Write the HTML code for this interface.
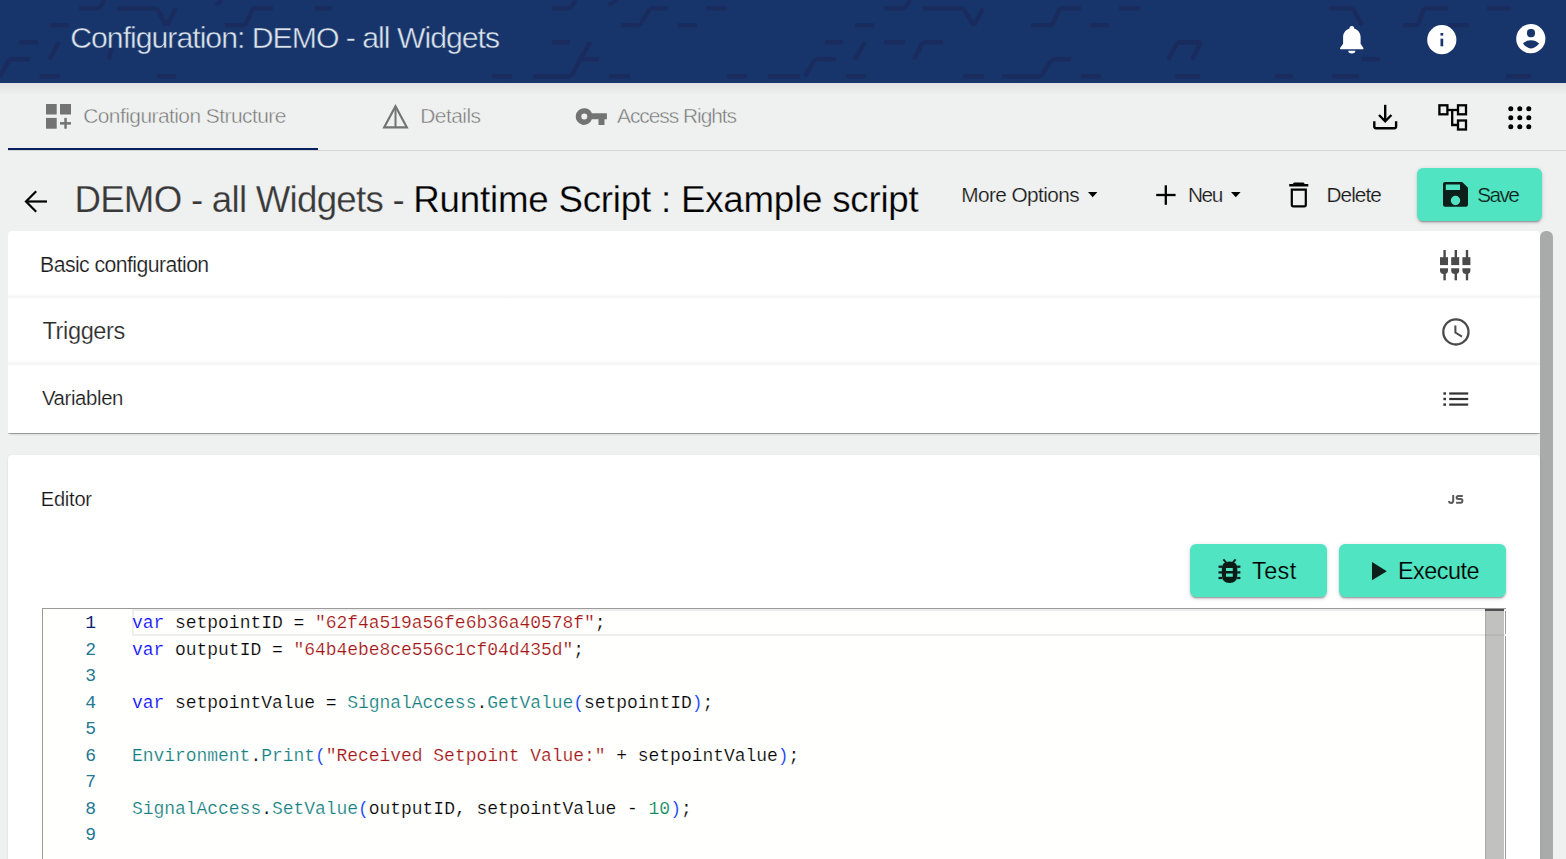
<!DOCTYPE html>
<html><head><meta charset="utf-8"><style>
html,body{margin:0;padding:0;width:1566px;height:859px;overflow:hidden;background:#eff1f0;font-family:"Liberation Sans",sans-serif;}
.t{position:absolute;white-space:pre;}
.a{position:absolute;}
svg{position:absolute;overflow:visible;}
</style></head><body>

<div class="a" style="left:0;top:0;width:1566px;height:83px;background:#17356b;overflow:hidden">
<svg width="1566" height="83" style="left:0;top:0"><g stroke="#1a2b5d" stroke-width="4.2" fill="none" stroke-linecap="butt">
<line x1="79" y1="8.3" x2="100" y2="8.3"/>
<line x1="117" y1="8.3" x2="157" y2="8.3"/>
<line x1="50" y1="25.3" x2="69" y2="25.3"/>
<line x1="19" y1="42.3" x2="38" y2="42.3"/>
<line x1="9.6" y1="59.3" x2="29.4" y2="59.3"/>
<line x1="39.6" y1="76.3" x2="60" y2="76.3"/>
<line x1="157" y1="76.3" x2="176" y2="76.3"/>
<line x1="253" y1="8.3" x2="273" y2="8.3"/>
<line x1="225" y1="25.3" x2="245" y2="25.3"/>
<line x1="315" y1="8.3" x2="332" y2="8.3"/>
<line x1="552" y1="8.3" x2="570" y2="8.3"/>
<line x1="650" y1="8.3" x2="668" y2="8.3"/>
<line x1="621" y1="25.3" x2="640" y2="25.3"/>
<line x1="678" y1="25.3" x2="697" y2="25.3"/>
<line x1="706" y1="8.3" x2="727" y2="8.3"/>
<line x1="552" y1="42.3" x2="570" y2="42.3"/>
<line x1="580" y1="59.3" x2="599" y2="59.3"/>
<line x1="492" y1="76.3" x2="512" y2="76.3"/>
<line x1="533" y1="76.3" x2="571" y2="76.3"/>
<line x1="609" y1="76.3" x2="630" y2="76.3"/>
<line x1="727" y1="76.3" x2="747" y2="76.3"/>
<line x1="768" y1="76.3" x2="800" y2="76.3"/>
<line x1="884" y1="8.3" x2="905" y2="8.3"/>
<line x1="923" y1="8.3" x2="963" y2="8.3"/>
<line x1="1060" y1="8.3" x2="1081" y2="8.3"/>
<line x1="1119" y1="8.3" x2="1140" y2="8.3"/>
<line x1="855" y1="25.3" x2="874" y2="25.3"/>
<line x1="1031" y1="25.3" x2="1052" y2="25.3"/>
<line x1="1090" y1="25.3" x2="1109" y2="25.3"/>
<line x1="825" y1="42.3" x2="843" y2="42.3"/>
<line x1="884" y1="42.3" x2="905" y2="42.3"/>
<line x1="923" y1="42.3" x2="943" y2="42.3"/>
<line x1="1178" y1="42.3" x2="1200" y2="42.3"/>
<line x1="815" y1="59.3" x2="836" y2="59.3"/>
<line x1="1052" y1="59.3" x2="1071" y2="59.3"/>
<line x1="846" y1="76.3" x2="866" y2="76.3"/>
<line x1="963" y1="76.3" x2="984" y2="76.3"/>
<line x1="1002" y1="76.3" x2="1041" y2="76.3"/>
<line x1="1081" y1="76.3" x2="1101" y2="76.3"/>
<line x1="1175" y1="76.3" x2="1200" y2="76.3"/>
<line x1="1329" y1="8.3" x2="1353" y2="8.3"/>
<line x1="1424" y1="8.3" x2="1448" y2="8.3"/>
<line x1="1487" y1="8.3" x2="1511" y2="8.3"/>
<line x1="1403" y1="25.3" x2="1418" y2="25.3"/>
<line x1="1448" y1="25.3" x2="1469" y2="25.3"/>
<line x1="1177" y1="42.3" x2="1201" y2="42.3"/>
<line x1="1362" y1="59.3" x2="1380" y2="59.3"/>
<line x1="1275" y1="76.3" x2="1293" y2="76.3"/>
<line x1="1332" y1="76.3" x2="1359" y2="76.3"/>
<line x1="1506" y1="76.3" x2="1531" y2="76.3"/>
<line x1="100" y1="8.3" x2="104" y2="0"/>
<line x1="157" y1="8.3" x2="166" y2="25.3"/>
<line x1="176" y1="8.3" x2="167" y2="25.3"/>
<line x1="58.7" y1="42.3" x2="49.8" y2="59.3"/>
<line x1="9.6" y1="59.3" x2="0" y2="76.3"/>
<line x1="112" y1="48.5" x2="108.5" y2="59.3"/>
<line x1="253" y1="8.3" x2="245" y2="25.3"/>
<line x1="216" y1="5" x2="222" y2="0"/>
<line x1="570" y1="8.3" x2="576" y2="0"/>
<line x1="609" y1="5" x2="617" y2="0"/>
<line x1="650" y1="8.3" x2="640" y2="25.3"/>
<line x1="590" y1="42.3" x2="571" y2="76.3"/>
<line x1="905" y1="8.3" x2="910" y2="0"/>
<line x1="963" y1="8.3" x2="974" y2="25.3"/>
<line x1="974" y1="25.3" x2="983" y2="8.3"/>
<line x1="1052" y1="25.3" x2="1060" y2="8.3"/>
<line x1="865" y1="42.3" x2="855" y2="59.3"/>
<line x1="923" y1="42.3" x2="914" y2="59.3"/>
<line x1="1178" y1="42.3" x2="1168" y2="59.3"/>
<line x1="815" y1="59.3" x2="805" y2="76.3"/>
<line x1="1052" y1="59.3" x2="1041" y2="76.3"/>
<line x1="1353" y1="8.3" x2="1362" y2="25.3"/>
<line x1="1448" y1="8.3" x2="1448" y2="8.3"/>
<line x1="1418" y1="25.3" x2="1424" y2="8.3"/>
<line x1="1201" y1="42.3" x2="1192" y2="59.3"/>
</g></svg></div>
<div class="t" style="left:70.2px;top:22.8px;font-size:30.23px;line-height:30.23px;letter-spacing:-0.997px;color:#dce3ec;-webkit-text-stroke:0.45px #17356b;">Configuration: DEMO - all Widgets</div>
<svg width="30" height="32" style="left:1337px;top:24px" viewBox="0 0 30 32">
<path fill="#fff" d="M6.1 19.7 V13.2 C6.1 8.4 9.2 5.4 12.4 4.7 A2.45 2.6 0 0 1 17.3 4.7 C20.5 5.4 23.6 8.4 23.6 13.2 V19.7 L26.4 24.1 Q26.9 25.3 25.7 25.3 H3.8 Q2.6 25.3 3.1 24.1 Z"/>
<path fill="#fff" d="M11.3 26.7 H18.3 A3.5 2.8 0 0 1 11.3 26.7 Z"/>
</svg>
<svg width="30" height="30" style="left:1426.5px;top:24.5px" viewBox="0 0 30 30">
<circle cx="14.8" cy="14.7" r="14.6" fill="#fff"/>
<rect x="13.5" y="8" width="2.7" height="2.6" fill="#17356b"/>
<rect x="13.5" y="13.7" width="2.7" height="7.6" fill="#17356b"/>
</svg>
<svg width="30" height="30" style="left:1515.8px;top:24.1px" viewBox="0 0 30 30">
<circle cx="14.8" cy="14.7" r="14.6" fill="#fff"/>
<rect x="11" y="5" width="8" height="8.2" rx="3.6" fill="#17356b"/>
<path fill="#17356b" d="M7 19.6 C11 15.0 19 15.0 23.1 19.6 C19.8 24.2 15.0 24.6 15.0 24.6 C15.0 24.6 10.5 24.2 7 19.6 Z"/>
</svg>
<div class="a" style="left:0;top:83px;width:1566px;height:12px;background:linear-gradient(#e0e2e1,#eff1f0)"></div>
<div class="a" style="left:8px;top:150px;width:1558px;height:1px;background:#d3d5d4"></div>
<div class="a" style="left:8px;top:147.7px;width:309.8px;height:2.3px;background:#0a1f5e"></div>
<svg width="26" height="26" style="left:45.8px;top:104px" viewBox="0 0 26 26">
<g fill="#737373"><rect x="0" y="0" width="10.7" height="10.5"/><rect x="14" y="0" width="11" height="10.5"/><rect x="0" y="13.9" width="10.7" height="10.8"/>
<rect x="18.3" y="13.9" width="2.5" height="10.8"/><rect x="14" y="18.1" width="11" height="2.5"/></g></svg>
<svg width="28" height="26" style="left:381.5px;top:104px" viewBox="0 0 28 26">
<path d="M13.5 2.3 L2.2 23.3 H24.8 Z" fill="none" stroke="#737373" stroke-width="2.2" stroke-linejoin="miter"/>
<line x1="13.5" y1="3" x2="13.5" y2="23.3" stroke="#737373" stroke-width="2"/></svg>
<svg width="32" height="18" style="left:576px;top:107.5px" viewBox="0 0 32 18">
<path fill="#737373" fill-rule="evenodd" d="M8.3 0.3 A8.3 8.3 0 0 1 15.9 5.3 H30.9 V11.2 H28.5 V17 H22.5 V11.2 H15.9 A8.3 8.3 0 1 1 8.3 0.3 Z M8.3 5.5 A3 3 0 1 0 8.3 11.5 A3 3 0 1 0 8.3 5.5 Z"/></svg>
<div class="t" style="left:83.2px;top:105.9px;font-size:20.93px;line-height:20.93px;letter-spacing:-0.545px;color:#757575;-webkit-text-stroke:0.45px #eff1f0;">Configuration Structure</div>
<div class="t" style="left:420.3px;top:106.1px;font-size:20.93px;line-height:20.93px;letter-spacing:-0.55px;color:#757575;-webkit-text-stroke:0.45px #eff1f0;">Details</div>
<div class="t" style="left:617.0px;top:106.1px;font-size:20.93px;line-height:20.93px;letter-spacing:-1.042px;color:#757575;-webkit-text-stroke:0.45px #eff1f0;">Access Rights</div>
<svg width="26" height="27" style="left:1372px;top:104px" viewBox="0 0 26 27">
<g fill="none" stroke="#000" stroke-width="2.4" stroke-linecap="butt"><line x1="13.2" y1="0.8" x2="13.2" y2="17"/>
<polyline points="7,11 13.2,17.3 19.4,11" stroke-linejoin="miter"/>
<path d="M2.3 17.2 V22.6 Q2.3 24.2 3.9 24.2 H22.5 Q24.1 24.2 24.1 22.6 V17.2"/></g></svg>
<svg width="30" height="28" style="left:1438px;top:104px" viewBox="0 0 30 28">
<g fill="none" stroke="#000" stroke-width="2.3"><rect x="1.4" y="1.3" width="8" height="9"/><rect x="20" y="1.3" width="8" height="9"/><rect x="20" y="16.5" width="8" height="9"/>
<polyline points="9.4,6 20,6"/><polyline points="14.2,6 14.2,21 20,21"/></g></svg>
<svg width="26" height="26" style="left:1507.6px;top:105.6px" viewBox="0 0 26 26"><g fill="#000"><circle cx="2.8" cy="2.8" r="2.5"/><circle cx="2.8" cy="11.8" r="2.5"/><circle cx="2.8" cy="20.8" r="2.5"/><circle cx="11.8" cy="2.8" r="2.5"/><circle cx="11.8" cy="11.8" r="2.5"/><circle cx="11.8" cy="20.8" r="2.5"/><circle cx="20.8" cy="2.8" r="2.5"/><circle cx="20.8" cy="11.8" r="2.5"/><circle cx="20.8" cy="20.8" r="2.5"/></g></svg>
<svg width="24" height="24" style="left:23.5px;top:189.5px" viewBox="0 0 24 24">
<g fill="none" stroke="#000" stroke-width="2.2"><line x1="2" y1="11.5" x2="23" y2="11.5"/><polyline points="12.2,1.3 2,11.5 12.2,21.7"/></g></svg>
<div class="t" style="left:74.4px;top:182.2px;font-size:36.7px;line-height:36.7px;letter-spacing:-0.747px;color:#383838;-webkit-text-stroke:0.25px #eff1f0;">DEMO - all Widgets - </div>
<div class="t" style="left:413.3px;top:182.2px;font-size:36.7px;line-height:36.7px;letter-spacing:-0.21px;color:#000000;-webkit-text-stroke:0.25px #eff1f0;">Runtime Script : Example script</div>
<div class="t" style="left:961.3px;top:184.5px;font-size:20.78px;line-height:20.78px;letter-spacing:-0.582px;color:#1a1a1a;-webkit-text-stroke:0.2px #eff1f0;">More Options</div>
<svg width="10" height="6" style="left:1087.5px;top:191.5px" viewBox="0 0 10 6"><path d="M0 0 H9.4 L4.7 5.3 Z" fill="#000"/></svg>
<svg width="20" height="20" style="left:1156px;top:184.5px" viewBox="0 0 20 20"><g stroke="#000" stroke-width="2.3"><line x1="9.8" y1="0.3" x2="9.8" y2="19.8"/><line x1="0.2" y1="10" x2="19.6" y2="10"/></g></svg>
<div class="t" style="left:1188.0px;top:184.6px;font-size:20.78px;line-height:20.78px;letter-spacing:-1.45px;color:#1a1a1a;-webkit-text-stroke:0.2px #eff1f0;">Neu</div>
<svg width="10" height="6" style="left:1231.2px;top:191.5px" viewBox="0 0 10 6"><path d="M0 0 H9.6 L4.8 5.3 Z" fill="#000"/></svg>
<svg width="20" height="26" style="left:1289px;top:181.5px" viewBox="0 0 20 26">
<path fill="#000" d="M5 0.5 H14.5 L15.8 2 H19.3 V4.5 H0.2 V2 H3.7 Z"/>
<path fill="none" stroke="#000" stroke-width="2.2" d="M2.8 7.6 V22.8 Q2.8 24.3 4.3 24.3 H15.3 Q16.8 24.3 16.8 22.8 V7.6 H2.8 Z"/></svg>
<div class="t" style="left:1326.6px;top:184.6px;font-size:20.78px;line-height:20.78px;letter-spacing:-0.98px;color:#1a1a1a;-webkit-text-stroke:0.2px #eff1f0;">Delete</div>
<div class="a" style="left:1417px;top:168px;width:125px;height:52.5px;border-radius:6px;background:#50e4c3;box-shadow:0 3px 1px -2px rgba(0,0,0,.2),0 2px 2px 0 rgba(0,0,0,.14),0 1px 5px 0 rgba(0,0,0,.12)"></div>
<svg width="26" height="26" style="left:1442.8px;top:182.2px" viewBox="0 0 26 26">
<path fill="#0d1f1a" fill-rule="evenodd" d="M2 0 H19.2 L25 5.8 V22.7 Q25 24.8 22.9 24.8 H2.1 Q0 24.8 0 22.7 V2 Q0 0 2 0 Z M2.8 2.6 V7.9 H17 V2.6 Z M12.5 13.8 A4.7 4.7 0 1 0 12.5 23.2 A4.7 4.7 0 1 0 12.5 13.8 Z"/></svg>
<div class="t" style="left:1477.3px;top:184.5px;font-size:20.78px;line-height:20.78px;letter-spacing:-1.6px;color:#0d1f1a;-webkit-text-stroke:0.2px #50e4c3;">Save</div>
<div class="a" style="left:8px;top:231px;width:1532px;height:202px;background:#fff;border-radius:4px 4px 0 0;box-shadow:0 1px 0.6px -0.3px rgba(0,0,0,.38),0 3px 3px -2px rgba(0,0,0,.18)"></div>
<div class="a" style="left:8px;top:293px;width:1532px;height:6px;background:linear-gradient(#fff,#f5f5f5 70%,#fff)"></div>
<div class="a" style="left:8px;top:360px;width:1532px;height:6px;background:linear-gradient(#fff,#f5f5f5 70%,#fff)"></div>
<div class="t" style="left:40.1px;top:253.6px;font-size:21.22px;line-height:21.22px;letter-spacing:-0.567px;color:#1a1a1a;-webkit-text-stroke:0.2px #fff;">Basic configuration</div>
<div class="t" style="left:42.5px;top:319.5px;font-size:23.55px;line-height:23.55px;letter-spacing:-0.386px;color:#2b2b2b;-webkit-text-stroke:0.2px #fff;">Triggers</div>
<div class="t" style="left:41.9px;top:388.3px;font-size:20.35px;line-height:20.35px;letter-spacing:-0.363px;color:#1a1a1a;-webkit-text-stroke:0.2px #fff;">Variablen</div>
<svg width="34" height="32" style="left:1440.4px;top:249.8px" viewBox="0 0 34 32"><g fill="#4a4a4a"><rect x="3.4" y="0" width="2.4" height="8" /><rect x="0.0" y="7.2" width="8" height="7.9"/><path d="M0.0 18.3 H8.0 V20.5 Q8.0 24 4.0 24 Q0.0 24 0.0 20.5 Z"/><rect x="3.4" y="23" width="2.4" height="7.3"/><rect x="14.599999999999818" y="0" width="2.4" height="8" /><rect x="11.199999999999818" y="7.2" width="8" height="7.9"/><path d="M11.199999999999818 18.3 H19.199999999999818 V20.5 Q19.199999999999818 24 15.199999999999818 24 Q11.199999999999818 24 11.199999999999818 20.5 Z"/><rect x="14.599999999999818" y="23" width="2.4" height="7.3"/><rect x="25.799999999999862" y="0" width="2.4" height="8" /><rect x="22.399999999999864" y="7.2" width="8" height="7.9"/><path d="M22.399999999999864 18.3 H30.399999999999864 V20.5 Q30.399999999999864 24 26.399999999999864 24 Q22.399999999999864 24 22.399999999999864 20.5 Z"/><rect x="25.799999999999862" y="23" width="2.4" height="7.3"/></g></svg>
<svg width="30" height="30" style="left:1441px;top:317px" viewBox="0 0 30 30">
<circle cx="14.9" cy="14.9" r="12.6" fill="none" stroke="#4a4a4a" stroke-width="2.3"/>
<polyline points="14.4,8.4 14.4,15.5 21,19.6" fill="none" stroke="#4a4a4a" stroke-width="2"/></svg>
<svg width="28" height="16" style="left:1443px;top:391px" viewBox="0 0 28 16">
<g fill="#333"><rect x="0.4" y="1.3" width="2.6" height="2.4"/><rect x="0.4" y="6.8" width="2.6" height="2.4"/><rect x="0.4" y="12.4" width="2.6" height="2.4"/>
<rect x="6.2" y="1.4" width="19" height="2.2"/><rect x="6.2" y="6.9" width="19" height="2.2"/><rect x="6.2" y="12.5" width="19" height="2.2"/></g></svg>
<div class="a" style="left:1540px;top:231px;width:13px;height:640px;background:#a9abaa;border-radius:6px 6px 0 0"></div>
<div class="a" style="left:8px;top:455px;width:1532px;height:420px;background:#fff;border-radius:4px 4px 0 0;box-shadow:0 1px 3px 0 rgba(0,0,0,.10)"></div>
<div class="t" style="left:40.8px;top:488.8px;font-size:20.06px;line-height:20.06px;letter-spacing:-0.24px;color:#141414;-webkit-text-stroke:0.2px #fff;">Editor</div>
<svg width="17" height="10" style="left:1447.5px;top:495px" viewBox="0 0 17 10">
<g fill="none" stroke="#5a5a5a" stroke-width="2"><path d="M5.2 0 V5.8 Q5.2 7.9 3.2 7.9 Q1.1 7.9 1.1 6"/><path d="M14.8 1.1 H10.4 Q8.6 1.1 8.6 2.6 Q8.6 4.1 10.4 4.1 H12.7 Q14.4 4.1 14.4 5.8 Q14.4 7.8 12.7 7.8 H8.1"/></g></svg>
<div class="a" style="left:1190px;top:544px;width:137px;height:53px;border-radius:6px;background:#50e4c3;box-shadow:0 3px 1px -2px rgba(0,0,0,.2),0 2px 2px 0 rgba(0,0,0,.14),0 1px 5px 0 rgba(0,0,0,.12)"></div>
<div class="a" style="left:1338.5px;top:544px;width:167.5px;height:53px;border-radius:6px;background:#50e4c3;box-shadow:0 3px 1px -2px rgba(0,0,0,.2),0 2px 2px 0 rgba(0,0,0,.14),0 1px 5px 0 rgba(0,0,0,.12)"></div>
<svg width="34" height="34" style="left:1212px;top:554px" viewBox="0 0 34 34">
<g fill="#0c1d18"><g stroke="#0c1d18" stroke-width="1.9" stroke-linecap="square"><line x1="12" y1="6.1" x2="14" y2="8.4"/><line x1="23" y1="6.1" x2="21" y2="8.4"/></g>
<path fill-rule="evenodd" d="M9.9 13.8 Q10.3 7.5 17.6 7.5 Q24.9 7.5 25.3 13.8 V21.3 Q25.3 28.9 17.6 28.9 Q9.9 28.9 9.9 21.3 Z M14 14 V17.1 H20.8 V14 Z M14 19.6 V22.8 H20.8 V19.6 Z"/>
<rect x="6.5" y="11.6" width="3.6" height="2.2"/><rect x="25.1" y="11.6" width="3.3" height="2.2"/>
<rect x="6.5" y="17.3" width="3.6" height="2.2"/><rect x="25.1" y="17.3" width="3.3" height="2.2"/>
<rect x="6.5" y="22.9" width="3.6" height="2.2"/><rect x="25.1" y="22.9" width="3.3" height="2.2"/></g></svg>
<div class="t" style="left:1252.0px;top:560.1px;font-size:23.4px;line-height:23.4px;letter-spacing:0.433px;color:#000000;-webkit-text-stroke:0.2px #50e4c3;">Test</div>
<svg width="16" height="20" style="left:1371.9px;top:561.9px" viewBox="0 0 16 20"><path d="M0 0 L14.8 9.15 L0 18.3 Z" fill="#0d1f1a"/></svg>
<div class="t" style="left:1397.9px;top:560.1px;font-size:23.4px;line-height:23.4px;letter-spacing:-0.467px;color:#000000;-webkit-text-stroke:0.2px #50e4c3;">Execute</div>
<div class="a" style="left:41.5px;top:608px;width:1462.5px;height:260px;border:1px solid #9a9a9a;background:#fffffe"></div>
<div class="a" style="left:132px;top:609px;width:1372px;height:23px;border:2px solid #eeeeee;border-right:none"></div>
<div class="a" style="left:1485px;top:609px;width:18.8px;height:260px;background:rgba(100,100,100,0.4);border-left:1px solid rgba(0,0,0,0.12);box-sizing:border-box"></div>
<div class="a" style="left:1485px;top:609px;width:18.8px;height:2.4px;background:#505050"></div>
<div class="t" style="left:60px;width:36px;text-align:right;top:610.03px;font-family:'Liberation Mono';font-size:18px;line-height:26.55px;color:#0b216f">1</div>
<div class="t" style="left:132px;top:610.03px;font-family:'Liberation Mono';font-size:18px;line-height:26.55px;letter-spacing:-0.04px;-webkit-text-stroke:0.2px #fffffe"><span style="color:#0000ff">var</span><span style="color:#000"> setpointID = </span><span style="color:#a31515">&quot;62f4a519a56fe6b36a40578f&quot;</span><span style="color:#000">;</span></div>
<div class="t" style="left:60px;width:36px;text-align:right;top:636.58px;font-family:'Liberation Mono';font-size:18px;line-height:26.55px;color:#237893">2</div>
<div class="t" style="left:132px;top:636.58px;font-family:'Liberation Mono';font-size:18px;line-height:26.55px;letter-spacing:-0.04px;-webkit-text-stroke:0.2px #fffffe"><span style="color:#0000ff">var</span><span style="color:#000"> outputID = </span><span style="color:#a31515">&quot;64b4ebe8ce556c1cf04d435d&quot;</span><span style="color:#000">;</span></div>
<div class="t" style="left:60px;width:36px;text-align:right;top:663.13px;font-family:'Liberation Mono';font-size:18px;line-height:26.55px;color:#237893">3</div>
<div class="t" style="left:60px;width:36px;text-align:right;top:689.68px;font-family:'Liberation Mono';font-size:18px;line-height:26.55px;color:#237893">4</div>
<div class="t" style="left:132px;top:689.68px;font-family:'Liberation Mono';font-size:18px;line-height:26.55px;letter-spacing:-0.04px;-webkit-text-stroke:0.2px #fffffe"><span style="color:#0000ff">var</span><span style="color:#000"> setpointValue = </span><span style="color:#13807f">SignalAccess</span><span style="color:#000">.</span><span style="color:#13807f">GetValue</span><span style="color:#0431fa">(</span><span style="color:#000">setpointID</span><span style="color:#0431fa">)</span><span style="color:#000">;</span></div>
<div class="t" style="left:60px;width:36px;text-align:right;top:716.23px;font-family:'Liberation Mono';font-size:18px;line-height:26.55px;color:#237893">5</div>
<div class="t" style="left:60px;width:36px;text-align:right;top:742.78px;font-family:'Liberation Mono';font-size:18px;line-height:26.55px;color:#237893">6</div>
<div class="t" style="left:132px;top:742.78px;font-family:'Liberation Mono';font-size:18px;line-height:26.55px;letter-spacing:-0.04px;-webkit-text-stroke:0.2px #fffffe"><span style="color:#13807f">Environment</span><span style="color:#000">.</span><span style="color:#13807f">Print</span><span style="color:#0431fa">(</span><span style="color:#a31515">&quot;Received Setpoint Value:&quot;</span><span style="color:#000"> + setpointValue</span><span style="color:#0431fa">)</span><span style="color:#000">;</span></div>
<div class="t" style="left:60px;width:36px;text-align:right;top:769.33px;font-family:'Liberation Mono';font-size:18px;line-height:26.55px;color:#237893">7</div>
<div class="t" style="left:60px;width:36px;text-align:right;top:795.88px;font-family:'Liberation Mono';font-size:18px;line-height:26.55px;color:#237893">8</div>
<div class="t" style="left:132px;top:795.88px;font-family:'Liberation Mono';font-size:18px;line-height:26.55px;letter-spacing:-0.04px;-webkit-text-stroke:0.2px #fffffe"><span style="color:#13807f">SignalAccess</span><span style="color:#000">.</span><span style="color:#13807f">SetValue</span><span style="color:#0431fa">(</span><span style="color:#000">outputID, setpointValue - </span><span style="color:#098658">10</span><span style="color:#0431fa">)</span><span style="color:#000">;</span></div>
<div class="t" style="left:60px;width:36px;text-align:right;top:822.43px;font-family:'Liberation Mono';font-size:18px;line-height:26.55px;color:#237893">9</div>
</body></html>
